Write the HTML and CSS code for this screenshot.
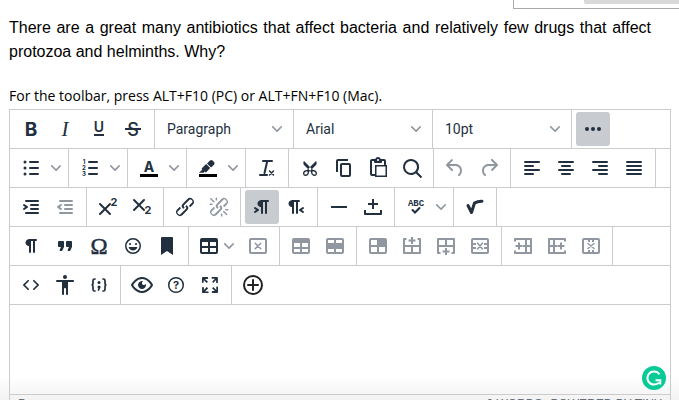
FILE: index.html
```html
<!DOCTYPE html>
<html lang="en">
<head>
    <meta charset="UTF-8">
    <meta name="viewport" content="width=device-width, initial-scale=1.0">
    <title>Question</title>
    <link rel="stylesheet" href="styles.css">
</head>
<body>
    <!-- Shared icons -->
    <svg class="defs" aria-hidden="true">
        <symbol id="chevron" viewBox="0 0 10 10"><path d="M8.7 2.2c.3-.3.8-.3 1 0 .4.4.4.9 0 1.2L5.7 7.8c-.3.3-.9.3-1.2 0L.2 3.4a.8.8 0 010-1.2c.3-.3.8-.3 1.1 0L5 6l3.7-3.8z"/></symbol>
    </svg>

    <div class="top-panel"><div class="top-panel-bar"></div></div>

    <main>
        <p class="question">There are a great many antibiotics that affect bacteria and relatively few drugs that affect protozoa and helminths. Why?</p>
        <label class="hint" for="answer">For the toolbar, press ALT+F10 (PC) or ALT+FN+F10 (Mac).</label>

        <div class="editor">
            <div class="toolbar">
                <div class="group">
                    <button class="btn" title="Bold"><svg viewBox="0 0 24 24"><text class="g-bold" x="12" y="19">B</text></svg></button>
                    <button class="btn" title="Italic"><svg viewBox="0 0 24 24"><text class="g-italic" x="12" y="19">I</text></svg></button>
                    <button class="btn" title="Underline"><svg viewBox="0 0 24 24"><text class="g-under" x="12" y="15">U</text><path d="M7 17h10v2H7z"/></svg></button>
                    <button class="btn" title="Strikethrough"><svg viewBox="0 0 24 24"><text class="g-strike" x="12" y="19">S</text><path d="M4 11h16v2H4z"/></svg></button>
                </div>
                <div class="group">
                    <div class="dropdown">
                        <select aria-label="Blocks"><option>Paragraph</option></select>
                        <svg class="chevron"><use href="#chevron"/></svg>
                    </div>
                </div>
                <div class="group">
                    <div class="dropdown">
                        <select aria-label="Fonts"><option>Arial</option></select>
                        <svg class="chevron"><use href="#chevron"/></svg>
                    </div>
                </div>
                <div class="group">
                    <div class="dropdown">
                        <select aria-label="Font sizes"><option>10pt</option></select>
                        <svg class="chevron"><use href="#chevron"/></svg>
                    </div>
                </div>
                <div class="group last">
                    <button class="btn active" title="More"><svg viewBox="0 0 24 24"><circle cx="6" cy="12" r="2"/><circle cx="12" cy="12" r="2"/><circle cx="18" cy="12" r="2"/></svg></button>
                </div>
            </div>

            <div class="toolbar">
                <!-- Lists and colors -->
                <div class="group">
                    <button class="btn" title="Bullet list"><svg viewBox="0 0 24 24"><circle cx="6" cy="6" r="1.5"/><circle cx="6" cy="12" r="1.5"/><circle cx="6" cy="18" r="1.5"/><path class="line" d="M11 6h8M11 12h8M11 18h8"/></svg></button>
                    <button class="split" title="Bullet list menu"><svg class="chevron"><use href="#chevron"/></svg></button>
                </div>
                <div class="group">
                    <button class="btn" title="Numbered list"><svg viewBox="0 0 24 24"><text class="g-num" x="6" y="8">1</text><text class="g-num" x="6" y="14">2</text><text class="g-num" x="6" y="20">3</text><path class="line" d="M11 6h8M11 12h8M11 18h8"/></svg></button>
                    <button class="split" title="Numbered list menu"><svg class="chevron"><use href="#chevron"/></svg></button>
                </div>
                <div class="group">
                    <button class="btn" title="Text color"><svg viewBox="0 0 24 24"><text class="g-color" x="12" y="16">A</text><path class="swatch" d="M3 18h18v3H3z"/></svg></button>
                    <button class="split" title="Text color menu"><svg class="chevron"><use href="#chevron"/></svg></button>
                </div>
                <div class="group">
                    <button class="btn" title="Background color"><svg viewBox="0 0 24 24"><path class="swatch" d="M3 18h18v3H3z"/><path d="M7.7 16.7H3l3.3-3.3-.7-.8L10.2 8l4 4.1-4 4.2c-.2.2-.6.2-.8 0l-.6-.7-1.1 1.1zm5-7.5L11 7.4l3-2.9a2 2 0 012.6 0L18 6c.7.7.7 2 0 2.7l-2.9 2.9-1.8-1.8-.5-.6"/></svg></button>
                    <button class="split" title="Background color menu"><svg class="chevron"><use href="#chevron"/></svg></button>
                </div>
                <div class="group">
                    <button class="btn" title="Clear formatting"><svg viewBox="0 0 24 24"><path class="line" d="M8 5h9M12.3 5L9.5 17M5 19h7"/><path class="line thin" d="M14.5 15l4 4M18.5 15l-4 4"/></svg></button>
                </div>

                <!-- Clipboard -->
                <div class="group">
                    <button class="btn" title="Cut"><svg viewBox="0 0 24 24"><path fill-rule="evenodd" d="M18 15c.6.7 1 1.4 1 2.3 0 .8-.2 1.5-.7 2l-.8.5-1 .2c-.4 0-.8 0-1.2-.3a3.9 3.9 0 01-2.1-2.2c-.2-.5-.3-1-.2-1.5l-1-1-1 1c0 .5 0 1-.2 1.5-.1.5-.4 1-.9 1.4-.3.4-.7.6-1.2.8l-1.2.3c-.4 0-.7 0-1-.2-.3 0-.6-.3-.8-.5-.5-.5-.8-1.2-.7-2 0-.9.4-1.6 1-2.2A3.7 3.7 0 018.6 14H9l1-1-4-4-.5-1a3.3 3.3 0 010-2c0-.4.3-.7.5-1l6 6 6-6 .5 1a3.3 3.3 0 010 2c0 .4-.3.7-.5 1l-4 4 1 1h.5c.4 0 .8 0 1.2.3.5.2.9.4 1.2.8zm-8.5 2.2l.1-.4v-.7a1 1 0 00-.2-.5 1 1 0 00-.4-.2 1.6 1.6 0 00-.8 0 2.6 2.6 0 00-.8.3 2.5 2.5 0 00-.9 1.1l-.1.4v.7l.2.5.5.2h.7a2.5 2.5 0 00.8-.3 2.8 2.8 0 001-1zm2.5-2.8c.4 0 .7-.1 1-.4.3-.3.4-.6.4-1s-.1-.7-.4-1c-.3-.3-.6-.4-1-.4s-.7.1-1 .4c-.3.3-.4.6-.4 1s.1.7.4 1c.3.3.6.4 1 .4zm5.4 4l.2-.5v-.7a2.6 2.6 0 00-.3-.8 2.4 2.4 0 00-.7-.7 2.5 2.5 0 00-.8-.3 1.5 1.5 0 00-.8 0 1 1 0 00-.4.2 1 1 0 00-.2.5 1.5 1.5 0 000 .7v.4l.3.4.3.4a2.8 2.8 0 00.8.5l.4.1h.7l.5-.2z"/></svg></button>
                    <button class="btn" title="Copy"><svg viewBox="0 0 24 24"><path fill-rule="evenodd" d="M16 3H6a2 2 0 00-2 2v11h2V5h10V3zm1 4a2 2 0 012 2v10a2 2 0 01-2 2h-7a2 2 0 01-2-2V9c0-1.1.9-2 2-2h7zm0 12V9h-7v10h7z"/></svg></button>
                    <button class="btn" title="Paste"><svg viewBox="0 0 24 24"><path fill-rule="evenodd" d="M18 9V5h-2v1c0 .6-.4 1-1 1H9a1 1 0 01-1-1V5H6v13h3V9h9zM9 20H6a2 2 0 01-2-2V5c0-1.1.9-2 2-2h3.2A3 3 0 0112 1a3 3 0 012.8 2H18a2 2 0 012 2v4h1v12H9v-1zm1.5-9.5v9h9v-9h-9zM12 3a1 1 0 00-1 1c0 .5.4 1 1 1s1-.5 1-1-.4-1-1-1z"/></svg></button>
                    <button class="btn" title="Find and replace"><svg viewBox="0 0 24 24"><path fill-rule="evenodd" d="M16 17.3a8 8 0 111.4-1.4l4.3 4.4a1 1 0 01-1.4 1.4l-4.4-4.3zm-5-.3a6 6 0 100-12 6 6 0 000 12z"/></svg></button>
                </div>
                <div class="group">
                    <button class="btn" title="Undo" disabled><svg viewBox="0 0 24 24"><path d="M6.4 8H12c3.7 0 6.2 2 6.8 5.1.6 2.7-.4 5.6-2.3 6.8a1 1 0 01-1-1.8c1.1-.6 1.8-2.7 1.4-4.6-.5-2.1-2.1-3.5-4.9-3.5H6.4l3.3 3.3a1 1 0 11-1.4 1.4l-5-5a1 1 0 010-1.4l5-5a1 1 0 011.4 1.4L6.4 8z"/></svg></button>
                    <button class="btn" title="Redo" disabled><svg viewBox="0 0 24 24"><path d="M17.6 10H12c-2.8 0-4.4 1.4-4.9 3.5-.4 2 .3 4 1.4 4.6a1 1 0 11-1 1.8c-2-1.2-2.9-4.1-2.3-6.8.6-3 3-5.1 6.8-5.1h5.6l-3.3-3.3a1 1 0 111.4-1.4l5 5a1 1 0 010 1.4l-5 5a1 1 0 01-1.4-1.4l3.3-3.3z"/></svg></button>
                </div>

                <!-- Alignment -->
                <div class="group">
                    <button class="btn" title="Align left"><svg viewBox="0 0 24 24"><path class="line" d="M5 6h14M5 10h8M5 14h14M5 18h8"/></svg></button>
                    <button class="btn" title="Align center"><svg viewBox="0 0 24 24"><path class="line" d="M5 6h14M8 10h8M5 14h14M8 18h8"/></svg></button>
                    <button class="btn" title="Align right"><svg viewBox="0 0 24 24"><path class="line" d="M5 6h14M11 10h8M5 14h14M11 18h8"/></svg></button>
                    <button class="btn" title="Justify"><svg viewBox="0 0 24 24"><path class="line" d="M5 6h14M5 10h14M5 14h14M5 18h14"/></svg></button>
                </div>
                <div class="group">
                    <button class="btn" title="Increase indent"><svg viewBox="0 0 24 24"><path class="line" d="M7 6h12M12 10h7M12 14h7M7 18h12"/><path d="M4.4 13.2L6.2 12l-1.8-1.2a1 1 0 011.2-1.6l3 2a1 1 0 010 1.6l-3 2a1 1 0 11-1.2-1.6z"/></svg></button>
                    <button class="btn" title="Decrease indent" disabled><svg viewBox="0 0 24 24"><path class="line" d="M7 6h12M12 10h7M12 14h7M7 18h12"/><path d="M8.6 13.2a1 1 0 01-1.2 1.6l-3-2a1 1 0 010-1.6l3-2a1 1 0 011.2 1.6L6.8 12l1.8 1.2z"/></svg></button>
                </div>
                <div class="group">
                    <button class="btn" title="Superscript"><svg viewBox="0 0 24 24"><path class="line" d="M4 9l10 10M14 9L4 19"/><text class="g-script" x="18" y="11">2</text></svg></button>
                    <button class="btn" title="Subscript"><svg viewBox="0 0 24 24"><path class="line" d="M4 5l10 10M14 5L4 15"/><text class="g-script" x="18" y="19">2</text></svg></button>
                </div>
                <div class="group">
                    <button class="btn" title="Insert link"><svg viewBox="0 0 24 24"><path d="M6.2 12.3a1 1 0 011.4 1.4l-2.1 2a2 2 0 102.7 2.8l4.8-4.8a1 1 0 000-1.4 1 1 0 111.4-1.3 2.9 2.9 0 010 4L9.6 20a3.9 3.9 0 01-5.5-5.5l2-2zm11.6-.6a1 1 0 01-1.4-1.4l2-2a2 2 0 10-2.6-2.8L11 10.3a1 1 0 000 1.4A1 1 0 119.6 13a2.9 2.9 0 010-4L14.4 4a3.9 3.9 0 015.5 5.5l-2 2z"/></svg></button>
                    <button class="btn" title="Remove link" disabled><svg viewBox="0 0 24 24"><path d="M6.2 12.3a1 1 0 011.4 1.4l-2 2a2 2 0 102.6 2.8l4.8-4.8a1 1 0 000-1.4 1 1 0 111.4-1.3 2.9 2.9 0 010 4L9.6 20a3.9 3.9 0 01-5.5-5.5l2-2zm11.6-.6a1 1 0 01-1.4-1.4l2.1-2a2 2 0 10-2.7-2.8L11 10.3a1 1 0 000 1.4A1 1 0 119.6 13a2.9 2.9 0 010-4L14.4 4a3.9 3.9 0 015.5 5.5l-2 2zM7.6 6.3a.8.8 0 01-1 1.1L3.3 4.2a.7.7 0 111-1l3.2 3.1zM5.1 8.6a.8.8 0 010 1.5H3a.8.8 0 010-1.5H5zm5-3.5a.8.8 0 01-1.5 0V3a.8.8 0 011.5 0V5zm6 11.8a.8.8 0 011-1l3.2 3.2a.8.8 0 01-1 1L16 17zm-2.2 2a.8.8 0 011.5 0V21a.8.8 0 01-1.5 0V19zm5-3.5a.7.7 0 110-1.5H21a.8.8 0 010 1.5H19z"/></svg></button>
                </div>
                <div class="group">
                    <button class="btn active" title="Left to right"><svg viewBox="0 0 24 24"><path d="M11 5h7a1 1 0 010 2h-1v11a1 1 0 01-2 0V7h-2v11a1 1 0 01-2 0v-6c-.5 0-1 0-1.4-.3A3.4 3.4 0 017.8 10a3.3 3.3 0 010-2.8 3.4 3.4 0 011.8-1.8L11 5zM4.4 16.2L6.2 15l-1.8-1.2a1 1 0 011.2-1.6l3 2a1 1 0 010 1.6l-3 2a1 1 0 11-1.2-1.6z"/></svg></button>
                    <button class="btn" title="Right to left"><svg viewBox="0 0 24 24"><path d="M8 5h7a1 1 0 010 2h-1v11a1 1 0 01-2 0V7h-2v11a1 1 0 01-2 0v-6c-.5 0-1 0-1.4-.3A3.4 3.4 0 014.8 10a3.3 3.3 0 010-2.8 3.4 3.4 0 011.8-1.8L8 5zm11.6 11.2a1 1 0 11-1.2 1.6l-3-2a1 1 0 010-1.6l3-2a1 1 0 111.2 1.6L17.8 15l1.8 1.2z"/></svg></button>
                </div>
                <div class="group">
                    <button class="btn" title="Horizontal line"><svg viewBox="0 0 24 24"><path d="M4 11h16v2H4z"/></svg></button>
                    <button class="btn" title="Nonbreaking space"><svg viewBox="0 0 24 24"><path class="line square" d="M4 15v4h16v-4M12 4v10M7 9h10"/></svg></button>
                </div>
                <div class="group">
                    <button class="btn" title="Spellcheck"><svg viewBox="0 0 24 24"><text class="g-abc" x="12" y="11">ABC</text><path class="line" d="M8.5 15l2.5 2.5 4.5-4.5"/></svg></button>
                    <button class="split" title="Spellcheck menu"><svg class="chevron"><use href="#chevron"/></svg></button>
                </div>
                <div class="group">
                    <button class="btn" title="Math"><svg viewBox="0 0 24 24"><path class="line thick" d="M5 10.5l3.5 7L11.5 8q3.5-2 7.5-1.8"/></svg></button>
                </div>

                <!-- Blocks and characters -->
                <div class="group">
                    <button class="btn" title="Show invisible characters"><svg viewBox="0 0 24 24"><path d="M10 5h7a1 1 0 010 2h-1v11a1 1 0 01-2 0V7h-2v11a1 1 0 01-2 0v-6c-.5 0-1 0-1.4-.3A3.4 3.4 0 016.8 10a3.3 3.3 0 010-2.8 3.4 3.4 0 011.8-1.8L10 5z"/></svg></button>
                    <button class="btn" title="Blockquote"><svg viewBox="0 0 24 24"><path d="M7.5 17h.9c.4 0 .7-.2.9-.6L11 13V8c0-.6-.4-1-1-1H6a1 1 0 00-1 1v4c0 .6.4 1 1 1h2l-1.3 2.7a.9.9 0 00.8 1.3zm8 0h.9c.4 0 .7-.2.9-.6L19 13V8c0-.6-.4-1-1-1h-4a1 1 0 00-1 1v4c0 .6.4 1 1 1h2l-1.3 2.7a.9.9 0 00.8 1.3z"/></svg></button>
                    <button class="btn" title="Special character"><svg viewBox="0 0 24 24"><text class="g-omega" x="12" y="20">Ω</text></svg></button>
                    <button class="btn" title="Emoticons"><svg viewBox="0 0 24 24"><path fill-rule="evenodd" d="M9 11c.6 0 1-.4 1-1s-.4-1-1-1a1 1 0 00-1 1c0 .6.4 1 1 1zm6 0c.6 0 1-.4 1-1s-.4-1-1-1a1 1 0 00-1 1c0 .6.4 1 1 1zm-3 5.5c2.1 0 4-1.5 4.4-3.5H7.6c.5 2 2.3 3.5 4.4 3.5zM12 4a8 8 0 100 16 8 8 0 000-16zm0 14.5a6.5 6.5 0 110-13 6.5 6.5 0 010 13z"/></svg></button>
                    <button class="btn" title="Anchor"><svg viewBox="0 0 24 24"><path d="M6 4v17l6-4 6 4V4c0-.6-.4-1-1-1H7a1 1 0 00-1 1z"/></svg></button>
                </div>

                <!-- Tables -->
                <div class="group">
                    <button class="btn menu" title="Table"><svg viewBox="0 0 24 24"><path fill-rule="evenodd" d="M19 4a2 2 0 012 2v12a2 2 0 01-2 2H5a2 2 0 01-2-2V6c0-1.1.9-2 2-2h14zM5 14v4h6v-4H5zm14 0h-6v4h6v-4zm0-6h-6v4h6V8zM5 12h6V8H5v4z"/></svg><svg class="chevron"><use href="#chevron"/></svg></button>
                    <button class="btn" title="Delete table" disabled><svg viewBox="0 0 24 24"><rect class="line" x="4" y="5" width="16" height="14" rx="1"/><path class="line thin" d="M9.2 9.2l5.6 5.6M14.8 9.2l-5.6 5.6"/></svg></button>
                </div>
                <div class="group">
                    <button class="btn" title="Row properties" disabled><svg viewBox="0 0 24 24"><path fill-rule="evenodd" d="M19 4a2 2 0 012 2v12a2 2 0 01-2 2H5a2 2 0 01-2-2V6c0-1.1.9-2 2-2h14zM5 15v3h6v-3H5zm14 0h-6v3h6v-3zm0-6h-6v4h6V9zM5 13h6V9H5v4z"/></svg></button>
                    <button class="btn" title="Merge cells" disabled><svg viewBox="0 0 24 24"><path fill-rule="evenodd" d="M19 4a2 2 0 012 2v12a2 2 0 01-2 2H5a2 2 0 01-2-2V6c0-1.1.9-2 2-2h14zM5 15v3h6v-3H5zm14 0h-6v3h6v-3zm0-9h-6v3h6V6zM5 9h6V6H5v3z"/></svg></button>
                </div>
                <div class="group">
                    <button class="btn" title="Cell properties" disabled><svg viewBox="0 0 24 24"><path fill-rule="evenodd" d="M19 4a2 2 0 012 2v12a2 2 0 01-2 2H5a2 2 0 01-2-2V6c0-1.1.9-2 2-2h14zm-8 9H5v5h6v-5zm8 0h-6v5h6v-5zm-8-7H5v5h6V6z"/></svg></button>
                    <button class="btn" title="Insert row before" disabled><svg viewBox="0 0 24 24"><path class="line grid" d="M6.5 5H4v14h16V5h-2.5M4 12h16M12 12v7M12 3v7M8.5 6.5h7"/></svg></button>
                    <button class="btn" title="Insert row after" disabled><svg viewBox="0 0 24 24"><path class="line grid" d="M6.5 19H4V5h16v14h-2.5M4 12h16M12 5v7M12 14v7M8.5 17.5h7"/></svg></button>
                    <button class="btn" title="Delete row" disabled><svg viewBox="0 0 24 24"><rect class="line grid" x="4" y="5" width="16" height="14" rx="1"/><path class="line grid" d="M5 10h3M5 14h3M16 10h3M16 14h3"/><path class="line thin" d="M9.5 9l5 6M14.5 9l-5 6"/></svg></button>
                </div>
                <div class="group">
                    <button class="btn" title="Insert column before" disabled><svg viewBox="0 0 24 24"><path class="line grid" d="M4 7.5V5h16v14H4v-2.5M15 5v14M12 12h8M4.5 12h7M8 8.5v7"/></svg></button>
                    <button class="btn" title="Insert column after" disabled><svg viewBox="0 0 24 24"><path class="line grid" d="M20 7.5V5H4v14h16v-2.5M9 5v14M4 12h8M12.5 12h7M16 8.5v7"/></svg></button>
                    <button class="btn" title="Delete column" disabled><svg viewBox="0 0 24 24"><rect class="line grid" x="4" y="5" width="16" height="14" rx="1"/><path class="line grid" d="M10 5v3M14 5v3M10 16v3M14 16v3"/><path class="line thin" d="M9 9.5l6 5M15 9.5l-6 5"/></svg></button>
                </div>

                <!-- Tools -->
                <div class="group">
                    <button class="btn" title="Source code"><svg viewBox="0 0 24 24"><path d="M9.8 15.7c.3.3.3.8 0 1-.3.4-.9.4-1.2 0l-4.4-4.1a.8.8 0 010-1.2l4.4-4.2c.3-.3.9-.3 1.2 0 .3.3.3.8 0 1.1L6 12l3.8 3.7zM14.2 15.7c-.3.3-.3.8 0 1 .4.4.9.4 1.2 0l4.4-4.1c.3-.3.3-.9 0-1.2l-4.4-4.2a.8.8 0 00-1.2 0c-.3.3-.3.8 0 1.1L18 12l-3.8 3.7z"/></svg></button>
                    <button class="btn" title="Accessibility"><svg viewBox="0 0 24 24"><path d="M12 2a2 2 0 012 2 2 2 0 01-2 2 2 2 0 01-2-2c0-1.1.9-2 2-2zm8 7h-5v12c0 .6-.4 1-1 1a1 1 0 01-1-1v-5c0-.6-.4-1-1-1a1 1 0 00-1 1v5c0 .6-.4 1-1 1a1 1 0 01-1-1V9H4a1 1 0 110-2h16c.6 0 1 .4 1 1s-.4 1-1 1z"/></svg></button>
                    <button class="btn" title="Code sample"><svg viewBox="0 0 24 24"><path class="line brace" d="M8 6h-.5Q6 6 6 7.5V10Q6 12 4.5 12 6 12 6 14v2.5Q6 18 7.5 18H8M16 6h.5Q18 6 18 7.5V10q0 2 1.5 2-1.5 0-1.5 2v2.5q0 1.5-1.5 1.5H16M12.5 14.5l-1 2.5"/><circle cx="12" cy="9.5" r="1.5"/><circle cx="12" cy="14" r="1.5"/></svg></button>
                </div>
                <div class="group">
                    <button class="btn" title="Preview"><svg viewBox="0 0 24 24"><path fill-rule="evenodd" d="M3.5 12.5c.5.8 1.1 1.6 1.8 2.3 2 2 4.2 3.2 6.7 3.2s4.7-1.2 6.7-3.2a16.2 16.2 0 002.1-2.8 15.7 15.7 0 00-2.1-2.8c-2-2-4.2-3.2-6.7-3.2a9.3 9.3 0 00-6.7 3.2A16.2 16.2 0 003.2 12c0 .2.2.3.3.5zm-2.4-1l.7-1.2L4 7.8C6.2 5.4 8.9 4 12 4c3 0 5.8 1.4 8.1 3.8a18.2 18.2 0 012.8 3.7v1l-.7 1.2-2.1 2.5c-2.3 2.4-5 3.8-8.1 3.8-3 0-5.8-1.4-8.1-3.8a18.2 18.2 0 01-2.8-3.7 1 1 0 010-1zm12-3.3a2 2 0 102.7 2.6 4 4 0 11-2.6-2.6z"/></svg></button>
                    <button class="btn" title="Help"><svg viewBox="0 0 24 24"><circle class="line thin" cx="12" cy="12" r="7.3"/><text class="g-help" x="12" y="16">?</text></svg></button>
                    <button class="btn" title="Fullscreen"><svg viewBox="0 0 24 24"><path d="M15.3 10l-1.2-1.3 2.9-3h-2.3a.9.9 0 110-1.7H19c.5 0 .9.4.9.9v4.4a.9.9 0 11-1.8 0V7l-2.9 3zm0 4l3 3v-2.3a.9.9 0 111.7 0V19c0 .5-.4.9-.9.9h-4.4a.9.9 0 110-1.8H17l-3-2.9 1.3-1.2zM10 15.4l-2.9 3h2.3a.9.9 0 110 1.7H5a.9.9 0 01-.9-.9v-4.4a.9.9 0 111.8 0V17l2.9-3 1.2 1.3zM8.7 10L5.7 7v2.3a.9.9 0 01-1.7 0V5c0-.5.4-.9.9-.9h4.4a.9.9 0 010 1.8H7l3 2.9-1.3 1.2z"/></svg></button>
                </div>
                <div class="group last">
                    <button class="btn insert" title="Insert"><svg viewBox="0 0 24 24"><circle class="line" cx="12" cy="12" r="9"/><path class="line" d="M12 7v10M7 12h10"/></svg></button>
                </div>
            </div>

            <div class="edit-area">
                <textarea id="answer"></textarea>
                <svg class="grammar" viewBox="0 0 24 24"><circle cx="12" cy="12" r="12"/><path d="M17.5 8.3A6.6 6.6 0 1012 18.6q3 0 5-2M13.5 14.2h4.8v4.3"/></svg>
            </div>
            <div class="statusbar">
                <span>P</span>
                <span class="words">0 words</span>
                <a href="#">Powered by Tiny</a>
            </div>
        </div>
    </main>
</body>
</html>
```
FILE: styles.css
```css
/* General reset */
* {
    margin: 0;
    padding: 0;
    box-sizing: border-box;
}

body {
    height: 100vh;
    overflow: hidden;
    font-family: Roboto, sans-serif;
    color: #000;
    background: linear-gradient(to top, #f3f3f3, #fff 24px);
}

.defs {
    display: none;
}

/* Panel cut off at the top of the page */
.top-panel {
    width: 166px;
    height: 9px;
    margin-left: auto;
    padding-left: 70px;
    border-left: 1px solid #aaa;
    border-bottom: 1px solid #aaa;
}

.top-panel-bar {
    height: 4px;
    background: #d9d9d9;
    border-bottom-left-radius: 2px;
}

main {
    padding: 7px 8px 0 9px;
}

.question {
    margin-right: 20px;
    font-family: "Liberation Sans", Arial, sans-serif;
    font-size: 16px;
    line-height: 24px;
    text-align: justify;
}

.hint {
    display: block;
    margin: 22px 0 3px;
    font-family: "Open Sans", sans-serif;
    font-size: 14px;
    line-height: 20px;
}

/* Editor */
.editor {
    border: 1px solid #ccc;
    color: #222f3e;
}

.toolbar {
    display: flex;
    flex-wrap: wrap;
    background: repeating-linear-gradient(transparent 0 38px, #ccc 38px 39px);
}

.group {
    display: flex;
    height: 39px;
    padding: 2px 4px 3px;
    border-right: 1px solid #ccc;
}

.group.last {
    border-right: none;
}

.btn,
.split {
    display: flex;
    align-items: center;
    justify-content: center;
    width: 34px;
    height: 34px;
    border: none;
    border-radius: 3px;
    background: none;
    color: #222f3e;
}

.btn svg {
    width: 24px;
    height: 24px;
    flex: none;
    fill: currentColor;
}

.btn:disabled {
    color: #9097a1;
}

.btn.active {
    background: #c8cbcf;
}

.btn.insert {
    color: #222;
}

.btn.menu {
    width: 48px;
    gap: 3px;
    padding-right: 3px;
}

.split {
    width: 16px;
}

.btn .chevron,
.chevron {
    width: 10px;
    height: 10px;
    fill: #9097a1;
}

.dropdown {
    position: relative;
    width: 130px;
    height: 34px;
}

.dropdown select {
    width: 100%;
    height: 100%;
    padding: 0 24px 0 8px;
    border: none;
    background: none;
    appearance: none;
    color: #222f3e;
    font-family: Roboto, sans-serif;
    font-size: 14px;
}

.dropdown .chevron {
    position: absolute;
    right: 7px;
    top: 12px;
    pointer-events: none;
}

/* Icon strokes */
.btn .line {
    fill: none;
    stroke: currentColor;
    stroke-width: 2;
    stroke-linecap: round;
}

.btn .thin {
    stroke-width: 1.5;
}

.btn .brace {
    stroke-width: 1.7;
}

.btn .thick {
    stroke-width: 3;
    stroke-linejoin: round;
}

.btn .square,
.btn .grid {
    stroke-linecap: butt;
    stroke-linejoin: round;
}

.btn .swatch {
    fill: #000;
}

/* Icon characters */
.btn text {
    font-family: Inter, sans-serif;
    font-weight: 700;
    text-anchor: middle;
}

.btn .g-bold {
    font-size: 19px;
}

.btn .g-italic {
    font-family: "Liberation Serif", serif;
    font-size: 21px;
    font-style: italic;
    font-weight: 400;
}

.btn .g-under {
    font-size: 14px;
    font-weight: 600;
}

.btn .g-strike {
    font-size: 18px;
    font-weight: 500;
}

.btn .g-color {
    font-size: 14px;
}

.btn .g-num {
    font-size: 6px;
}

.btn .g-script {
    font-size: 11px;
}

.btn .g-abc {
    font-family: "Liberation Mono", monospace;
    font-size: 9px;
}

.btn .g-omega {
    font-family: "Liberation Serif", serif;
    font-size: 23px;
    font-weight: 400;
    stroke: currentColor;
    stroke-width: 0.5;
}

.btn .g-help {
    font-size: 11px;
}

/* Text area and status bar */
.edit-area {
    position: relative;
}

.edit-area textarea {
    display: block;
    width: 100%;
    height: 89px;
    padding: 8px;
    border: none;
    outline: none;
    resize: none;
    background: none;
}

.grammar {
    position: absolute;
    right: 4px;
    bottom: 4px;
    width: 24px;
    height: 24px;
    fill: #07ca97;
}

.grammar path {
    fill: none;
    stroke: #fff;
    stroke-width: 2;
}

.statusbar {
    display: flex;
    gap: 8px;
    padding: 0 8px;
    border-top: 1px solid #ccc;
    color: #646d78;
    font-family: "Liberation Sans", Arial, sans-serif;
    font-size: 12px;
    line-height: 18px;
    text-transform: uppercase;
}

.words {
    margin-left: auto;
}

.statusbar a {
    color: inherit;
    text-decoration: none;
}
```
